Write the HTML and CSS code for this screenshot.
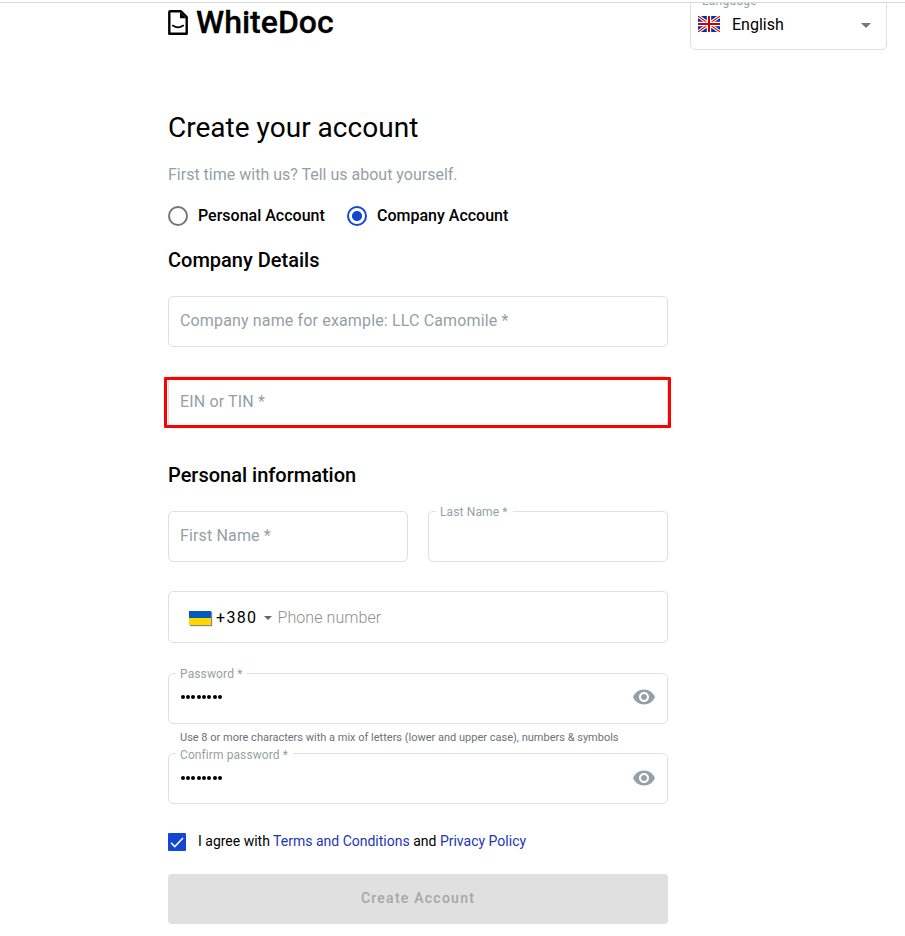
FILE: index.html
```html
<!DOCTYPE html>
<html lang="en">
<head>
<meta charset="utf-8">
<title>WhiteDoc</title>
<link rel="stylesheet" href="styles.css">
</head>
<body>
<div class="page">
  <header class="header">
    <div class="brand">
      <svg class="brand-icon" viewBox="0 0 20 26" width="20" height="26">
        <path d="M2.2 1.3H13L18.7 7V23.7H1.3V2.2Q1.3 1.3 2.2 1.3Z" fill="none" stroke="#000" stroke-width="2.4" stroke-linejoin="round"/>
        <path d="M12 2V8.2H18.5Z" fill="#000"/>
        <path d="M4.8 15.6Q10 19.2 15.2 15.6" fill="none" stroke="#000" stroke-width="1.8" stroke-linecap="round"/>
      </svg>
      <span class="brand-name">WhiteDoc</span>
    </div>
    <div class="language">
      <span class="notch">Language</span>
      <svg class="flag-uk" viewBox="0 0 22 16" width="22" height="16">
        <path fill="#003399" d="M0 0h22v16H0z"/>
        <path d="M0 0L22 16M22 0L0 16" stroke="#fff" stroke-width="3.4"/>
        <path d="M0 0L22 16M22 0L0 16" stroke="#d00" stroke-width="1.1"/>
        <path d="M11 0V16M0 8H22" stroke="#fff" stroke-width="4.4"/>
        <path d="M11 0V16M0 8H22" stroke="#d00000" stroke-width="2"/>
      </svg>
      <span class="language-name">English</span>
      <svg class="caret" viewBox="0 0 10 5" width="10" height="5"><path d="M0 0h10L5 5z" fill="#757575"/></svg>
    </div>
  </header>
  <main class="form">
    <h1>Create your account</h1>
    <p class="intro">First time with us? Tell us about yourself.</p>
    <div class="radios">
      <span class="radio"></span><span class="radio-label personal">Personal Account</span>
      <span class="radio checked"></span><span class="radio-label">Company Account</span>
    </div>
    <h2>Company Details</h2>
    <div class="field company"><span class="placeholder">Company name for example: LLC Camomile *</span></div>
    <div class="field ein"><span class="placeholder">EIN or TIN *</span><span class="highlight"></span></div>
    <h2 class="personal-title">Personal information</h2>
    <div class="names">
      <div class="field"><span class="placeholder">First Name *</span></div>
      <div class="field"><span class="notch">Last Name *</span></div>
    </div>
    <div class="field phone">
      <span class="flag-ua"></span>
      <span class="code">+380</span>
      <svg class="phone-caret" viewBox="0 0 8 4" width="8" height="4"><path d="M0 0h8L4 4z" fill="#666"/></svg>
      <span class="phone-text">Phone number</span>
    </div>
    <div class="field password">
      <span class="notch">Password *</span>
      <span class="dots"><i></i><i></i><i></i><i></i><i></i><i></i><i></i><i></i></span>
      <svg class="eye" viewBox="0 0 24 24" width="24" height="24"><path d="M12 4.5C7 4.5 2.73 7.61 1 12c1.73 4.39 6 7.5 11 7.5s9.27-3.11 11-7.5c-1.73-4.39-6-7.5-11-7.5zM12 17c-2.76 0-5-2.24-5-5s2.24-5 5-5 5 2.24 5 5-2.24 5-5 5zm0-8c-1.66 0-3 1.34-3 3s1.34 3 3 3 3-1.34 3-3-1.34-3-3-3z" fill="#95a0ac"/></svg>
    </div>
    <p class="hint">Use 8 or more characters with a mix of letters (lower and upper case), numbers &amp; symbols</p>
    <div class="field confirm">
      <span class="notch">Confirm password *</span>
      <span class="dots"><i></i><i></i><i></i><i></i><i></i><i></i><i></i><i></i></span>
      <svg class="eye" viewBox="0 0 24 24" width="24" height="24"><path d="M12 4.5C7 4.5 2.73 7.61 1 12c1.73 4.39 6 7.5 11 7.5s9.27-3.11 11-7.5c-1.73-4.39-6-7.5-11-7.5zM12 17c-2.76 0-5-2.24-5-5s2.24-5 5-5 5 2.24 5 5-2.24 5-5 5zm0-8c-1.66 0-3 1.34-3 3s1.34 3 3 3 3-1.34 3-3-1.34-3-3-3z" fill="#95a0ac"/></svg>
    </div>
    <div class="agree">
      <svg class="checkbox" viewBox="0 0 18 18" width="18" height="18"><rect width="18" height="18" rx="1" fill="#1546cf"/><path d="M3 9.8L6.8 13.6L15 5" fill="none" stroke="#fff" stroke-width="1.5"/></svg>
      <span class="agree-text">I agree with <a>Terms and Conditions</a> and <a>Privacy Policy</a></span>
    </div>
    <button class="submit" disabled>Create Account</button>
  </main>
</div>
</body>
</html>
```
FILE: styles.css
```css
* { box-sizing: border-box; }
body { margin: 0; background: #fff; color: #000; font-family: Roboto, sans-serif; font-size: 16px; }
.page { height: 934px; margin-top: 2px; border-top: 1px solid #dadada; overflow: hidden; }
.header { display: flex; justify-content: space-between; height: 106px; padding: 0 18px 0 168px; }
.brand { display: flex; height: 38px; align-items: center; gap: 8px; }
.brand-icon { display: block; margin-top: 1px; }
.brand-name { font-size: 32px; font-weight: 500; line-height: 38px; -webkit-text-stroke: .3px #000; }
.language { position: relative; display: flex; align-items: center; width: 197px; height: 51px; margin-top: -4px; padding: 0 15px 0 7px; border: 1px solid #dfdfdf; border-radius: 5px; }
.flag-uk { margin-top: -1px; }
.language-name { margin-left: 12px; line-height: 20px; }
.caret { margin-left: auto; margin-top: 2px; }
.notch { position: absolute; top: -7px; left: 7px; padding: 0 5px 0 4px; background: #fff; color: #959fa6; font-size: 12px; line-height: 14px; letter-spacing: .13px; white-space: nowrap; }
.language .notch { top: -6px; letter-spacing: .3px; }
.form { width: 500px; margin-left: 168px; }
h1 { margin: 0; font-size: 28px; font-weight: 400; line-height: 38px; letter-spacing: .02px; }
.intro { margin: 18px 0 0; color: #959fa6; line-height: 20px; }
.radios { display: flex; align-items: center; height: 20px; margin-top: 21px; font-weight: 500; }
.radio { width: 20px; height: 20px; border: 2px solid #757575; border-radius: 50%; margin-right: 10px; }
.radio.checked { border-color: #1546cf; background: radial-gradient(circle, #1546cf 4.6px, #fff 5.4px); }
.radio-label { margin-top: -2px; }
.radio-label.personal { width: 127px; margin-right: 22px; white-space: nowrap; }
h2 { margin: 22px 0 0; font-size: 20px; font-weight: 500; line-height: 24px; }
.field { position: relative; display: flex; align-items: center; width: 100%; height: 51px; border: 1px solid #dfdfdf; border-radius: 5px; }
.placeholder { margin: -1px 0 0 11px; color: #959fa6; line-height: 20px; letter-spacing: .15px; }
.company { margin-top: 24px; }
.ein { margin-top: 29px; height: 52px; }
.highlight { position: absolute; left: -5px; top: 0; width: 507px; height: 51px; border: 3px solid #f00; border-radius: 1px; }
.personal-title { margin-top: 35px; }
.names { display: grid; grid-template-columns: 240px 240px; gap: 20px; margin-top: 24px; }
.phone { height: 52px; margin-top: 29px; padding-left: 20px; }
.flag-ua { width: 22px; height: 14px; margin-top: 2px; background: linear-gradient(#005bbe 50%, #ffd600 50%); box-shadow: 1px 1px 1px #888; }
.code { margin-left: 5px; letter-spacing: 1.35px; }
.phone-caret { margin-left: 7px; margin-top: 2px; }
.phone-text { margin-left: 5px; color: #8f8f8f; font-weight: 300; letter-spacing: .08px; }
.password { margin-top: 30px; }
.dots { display: flex; gap: 1.4px; margin: -3px 0 0 11.5px; }
.confirm .dots { margin-top: -2px; }
.dots i { width: 4px; height: 4px; border-radius: 50%; background: #000; }
.eye { margin: -3px 11px 0 auto; }
.confirm .eye { margin-top: -2px; }
.confirm .notch { top: -6px; letter-spacing: .09px; }
.hint { height: 29px; margin: 0; padding: 7px 0 0 12px; color: #6d7175; font-size: 11px; line-height: 13px; white-space: nowrap; }
.agree { display: flex; align-items: center; height: 20px; margin-top: 28px; font-size: 14px; gap: 12px; }
.agree-text { margin-top: -2px; }
.agree a { color: #1c36b5; }
.submit { display: block; width: 500px; height: 50px; margin-top: 22px; padding: 0 0 2px; border: 0; border-radius: 4px; background: #e0e0e0; color: #a6a6a6; font: 500 14px Roboto, sans-serif; letter-spacing: 1.25px; }
```
